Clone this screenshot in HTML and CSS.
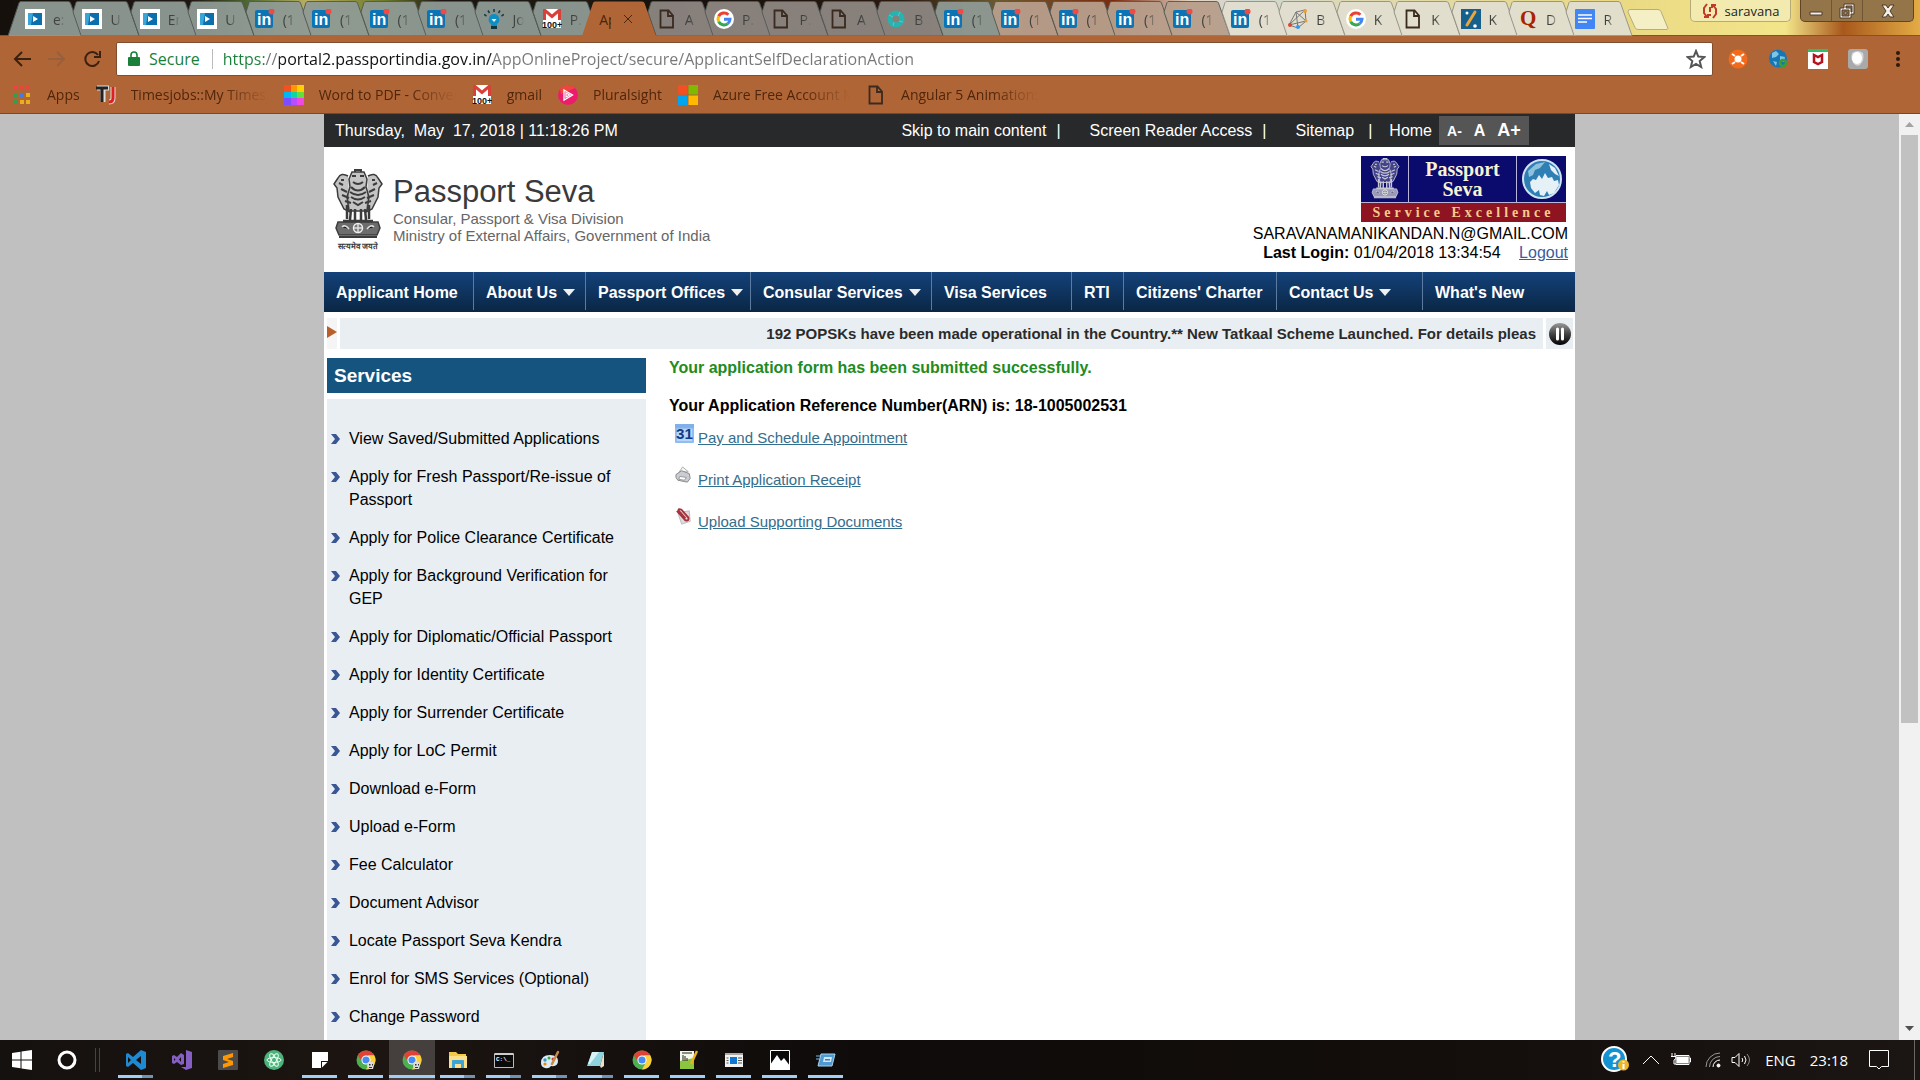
FILE: index.html
```html
<!DOCTYPE html>
<html lang="en">
<head>
<meta charset="utf-8">
<meta name="viewport" content="width=device-width, initial-scale=1">
<title>Passport Seva</title>
<link rel="stylesheet" href="styles.css">
</head>
<body>
<svg class="defs" aria-hidden="true">
  <defs>
    <symbol id="shape" viewBox="0 0 76 36"><path d="M16 35.500L8 12L11 2.500Q11.500 1.500 13 1.500H60Q62 1.500 62.500 3L74 35.500"/></symbol>
    <symbol id="shape-active" viewBox="0 0 76 36"><path d="M0 36L11 3Q11.500 1.500 13 1.500H60Q62 1.500 62.500 3L74 36"/></symbol>
    <symbol id="play" viewBox="0 0 20 20"><path fill="#fff" d="M0 0h20v20H0z"/><path fill="#3aa6d8" d="M3 4h14v12H3z"/><path fill="#0b6fae" d="M8 4h9v12H6z"/><path fill="#fff" d="M8 7l5 3-5 3z"/></symbol>
    <symbol id="linkedin" viewBox="0 0 20 20"><rect y="1" width="18" height="18" rx="2" fill="#0a74b4"/><text x="2" y="16" font-family="Liberation Sans" font-weight="700" font-size="16" fill="#fff">in</text><circle cx="16.500" cy="2.500" r="3" fill="#ef4a45"/></symbol>
    <symbol id="bulb" viewBox="0 0 20 20"><path fill="#0d8fc4" d="M10 5a5.500 5.500 0 0 1 3 10v2H7v-2a5.500 5.500 0 0 1 3-10z"/><path fill="#10353f" d="M7 17h6v3H7z"/><path fill="#fff" d="M7.500 10h5L10 13z"/><path stroke="#123842" stroke-width="1.500" fill="none" d="M10 3V0M5.500 4L4 1.500M14.500 4L16 1.500M2.500 7L0 5.500M17.500 7L20 5.500"/></symbol>
    <symbol id="gmail" viewBox="0 0 20 20"><path fill="#fff" d="M1 0h18v19H1z"/><path fill="none" stroke="#d8403a" stroke-width="3" d="M2.500 11V1L10 7.500 17.500 1v10"/><text x="0" y="19" font-family="Liberation Sans" font-weight="700" font-size="9" fill="#111">100+</text></symbol>
    <symbol id="page" viewBox="0 0 20 20"><path fill="none" stroke="#3a2a20" stroke-width="1.800" d="M3.500 1.500h8l4.500 5v12H3.500zM11 1.500v5.500h5"/></symbol>
    <symbol id="google" viewBox="0 0 20 20"><circle cx="10" cy="10" r="10" fill="#fff"/><g fill="none" stroke-width="3"><path stroke="#ea4335" d="M4.700 7.300A6 6 0 0 1 14.400 5.700"/><path stroke="#fbbc05" d="M4.700 12.700a6 6 0 0 1 0-5.400"/><path stroke="#34a853" d="M13.800 14.600a6 6 0 0 1-9.100-1.900"/><path stroke="#4285f4" d="M10 10.200h6a6 6 0 0 1-2.200 4.400"/></g></symbol>
    <symbol id="ring" viewBox="0 0 20 20"><circle cx="10" cy="10" r="6" fill="none" stroke="#27b3b0" stroke-width="5"/><path stroke="#5cc8c2" stroke-width="1" d="M3 6l4 2M14 3l-2 4M17 13l-4-1M7 17l1-4"/></symbol>
    <symbol id="net" viewBox="0 0 20 20"><path fill="none" stroke="#777" d="M1 16L8 3l9-2 1 11-8 7zM1 16l17-4M8 3l2 16M17 1L1 16M8 3l10 9"/><g fill="#e8a030"><circle cx="17" cy="2" r="2"/><circle cx="18" cy="12" r="1.500"/></g><circle cx="2" cy="16" r="2" fill="#d43"/><circle cx="10" cy="18" r="2" fill="#39e"/></symbol>
    <symbol id="slash" viewBox="0 0 20 20"><path fill="#175f8c" d="M0 0h20v20H0z"/><path stroke="#e9a63a" stroke-width="3" stroke-linecap="round" d="M14 3L6 16"/><circle cx="6" cy="4" r="1.500" fill="#fff"/><circle cx="14" cy="17" r="1.800" fill="#fff"/></symbol>
    <symbol id="quora" viewBox="0 0 20 20"><text x="2" y="16" font-family="Liberation Serif" font-weight="700" font-size="21" fill="#a82400">Q</text></symbol>
    <symbol id="docs" viewBox="0 0 20 20"><rect width="20" height="20" rx="1" fill="#4285f4"/><path stroke="#fff" stroke-width="1.600" d="M3 6h14M3 9.500h14M3 13h9"/></symbol>
    <symbol id="chrome" viewBox="0 0 20 20"><circle cx="10" cy="10" r="9.500" fill="#4caf50"/><path fill="#e04336" d="M1.800 5.200a9.500 9.500 0 0 1 16.400 0H10L6 12z"/><path fill="#fdd03b" d="M18.200 5.200A9.500 9.500 0 0 1 10 19.500L14 12l-2-6.800z"/><circle cx="10" cy="10" r="4.600" fill="#fff"/><circle cx="10" cy="10" r="3.600" fill="#4a8af4"/></symbol>
    <symbol id="chrome-user" viewBox="0 0 20 20"><use href="#chrome"/><path fill="#ddd" d="M12 12h5l1 3-1 4h-4l-2-3z"/><path fill="#333" d="M13 14h1.500v1.500H13zM16 14h1v1.500h-1zM13 17h3v1h-3z"/></symbol>
    <symbol id="emblem" viewBox="0 0 50 72">
      <g fill="none" stroke="currentColor">
        <path fill="currentColor" fill-opacity=".3" stroke-width="1.500" d="M19 3h12l3 7-1 8 3 10-2 14H16l-2-14 3-10-1-8z"/>
        <path fill="currentColor" fill-opacity=".3" stroke-width="1.500" d="M15 7q-7-4-10 2l-4 6 3 4 1 9 6 12 6 3M35 7q7-4 10 2l4 6-3 4-1 9-6 12-6 3"/>
        <path stroke-width="2" d="M19 7h4M27 7h4M20 13q5 4 10 0M22 3v-2h6v2M18 18q7 7 14 0M17 23q8 6 16 0M18 28q7 5 14 0M6 14l4 2M44 14l-4 2M8 20l6 3M42 20l-6 3M9 26l7 3M41 26l-7 3M12 32l6 2M38 32l-6 2M20 33l5 3 5-3M8 11h3M39 11h3"/>
        <path stroke-width="2.500" d="M14 36v14M18 40l-1 11M22 40v11M28 40v11M32 40l1 11M36 36v14M10 52h30"/>
        <path fill="currentColor" fill-opacity=".75" stroke-width="1.500" d="M5 53h40l2 6-3 7H6l-3-7z"/>
      </g>
      <circle cx="25" cy="59" r="4.500" fill="#777" stroke="#eee" stroke-width="1.500"/><path stroke="#ddd" stroke-width="1.500" d="M9 58q3-3 7 2M34 60q4-5 7-2M25 55v8M21 59h8"/>
      <path fill="currentColor" d="M6 67h38v2H6z"/>
    </symbol>
    <symbol id="chev" viewBox="0 0 10 12"><path fill="#3a5795" d="M0 1l5 0 4 5-4 5H0l4-5z"/></symbol>
  </defs>
</svg>

<header class="browser">
  <div class="titlebar">
    <nav class="tabs" aria-label="Tabs">
      <a class="tab" href="#"><svg class="shape"><use href="#shape-active"/></svg><svg class="fav"><use href="#play"/></svg><span>e:</span></a>
      <a class="tab" href="#"><svg class="shape"><use href="#shape"/></svg><svg class="fav"><use href="#play"/></svg><span>U</span></a>
      <a class="tab" href="#"><svg class="shape"><use href="#shape"/></svg><svg class="fav"><use href="#play"/></svg><span>En</span></a>
      <a class="tab" href="#"><svg class="shape"><use href="#shape"/></svg><svg class="fav"><use href="#play"/></svg><span>U</span></a>
      <a class="tab" href="#"><svg class="shape"><use href="#shape"/></svg><svg class="fav"><use href="#linkedin"/></svg><span>(1</span></a>
      <a class="tab" href="#"><svg class="shape"><use href="#shape"/></svg><svg class="fav"><use href="#linkedin"/></svg><span>(1</span></a>
      <a class="tab" href="#"><svg class="shape"><use href="#shape"/></svg><svg class="fav"><use href="#linkedin"/></svg><span>(1</span></a>
      <a class="tab" href="#"><svg class="shape"><use href="#shape"/></svg><svg class="fav"><use href="#linkedin"/></svg><span>(1</span></a>
      <a class="tab" href="#"><svg class="shape"><use href="#shape"/></svg><svg class="fav"><use href="#bulb"/></svg><span>Jo</span></a>
      <a class="tab" href="#"><svg class="shape"><use href="#shape"/></svg><svg class="fav"><use href="#gmail"/></svg><span>P.</span></a>
      <div class="tab active"><svg class="shape"><use href="#shape-active"/></svg><a href="#">Ap</a><button type="button" aria-label="Close tab"><svg viewBox="0 0 10 10"><path d="M1 1l8 8M9 1L1 9"/></svg></button></div>
      <a class="tab brown" href="#"><svg class="shape"><use href="#shape"/></svg><svg class="fav"><use href="#page"/></svg><span>A</span></a>
      <a class="tab brown" href="#"><svg class="shape"><use href="#shape"/></svg><svg class="fav"><use href="#google"/></svg><span>P.</span></a>
      <a class="tab brown" href="#"><svg class="shape"><use href="#shape"/></svg><svg class="fav"><use href="#page"/></svg><span>P.</span></a>
      <a class="tab brown" href="#"><svg class="shape"><use href="#shape"/></svg><svg class="fav"><use href="#page"/></svg><span>A</span></a>
      <a class="tab brown" href="#"><svg class="shape"><use href="#shape"/></svg><svg class="fav"><use href="#ring"/></svg><span>B</span></a>
      <a class="tab" href="#"><svg class="shape"><use href="#shape"/></svg><svg class="fav"><use href="#linkedin"/></svg><span>(1</span></a>
      <a class="tab warm" href="#"><svg class="shape"><use href="#shape"/></svg><svg class="fav"><use href="#linkedin"/></svg><span>(1</span></a>
      <a class="tab warm" href="#"><svg class="shape"><use href="#shape"/></svg><svg class="fav"><use href="#linkedin"/></svg><span>(1</span></a>
      <a class="tab warm" href="#"><svg class="shape"><use href="#shape"/></svg><svg class="fav"><use href="#linkedin"/></svg><span>(1</span></a>
      <a class="tab warm" href="#"><svg class="shape"><use href="#shape"/></svg><svg class="fav"><use href="#linkedin"/></svg><span>(1</span></a>
      <a class="tab light" href="#"><svg class="shape"><use href="#shape"/></svg><svg class="fav"><use href="#linkedin"/></svg><span>(1</span></a>
      <a class="tab light" href="#"><svg class="shape"><use href="#shape"/></svg><svg class="fav"><use href="#net"/></svg><span>B</span></a>
      <a class="tab light" href="#"><svg class="shape"><use href="#shape"/></svg><svg class="fav"><use href="#google"/></svg><span>K</span></a>
      <a class="tab light" href="#"><svg class="shape"><use href="#shape"/></svg><svg class="fav"><use href="#page"/></svg><span>K</span></a>
      <a class="tab light" href="#"><svg class="shape"><use href="#shape"/></svg><svg class="fav"><use href="#slash"/></svg><span>K</span></a>
      <a class="tab light" href="#"><svg class="shape"><use href="#shape"/></svg><svg class="fav"><use href="#quora"/></svg><span>D</span></a>
      <a class="tab light" href="#"><svg class="shape"><use href="#shape"/></svg><svg class="fav"><use href="#docs"/></svg><span>R</span></a>
    </nav>
    <div class="window">
      <button class="newtab" type="button" aria-label="New tab"><svg viewBox="0 0 42 22"><path d="M3 .5h28q2 0 3 2l7 17q0 1-2 1H11q-2 0-3-2L1 3Q1 .5 3 .5z"/></svg></button>
      <button class="profile" type="button"><svg viewBox="0 0 16 16"><path d="M5 1L2 5v5l3 4M2 14h4v-3M11 15l3-4V6l-3-4M14 2h-4v3M8 4v5M8 11v2"/></svg>saravana</button>
      <div class="winbtns">
        <button type="button" aria-label="Minimize"><svg viewBox="0 0 16 16"><path d="M2 9h12v3H2z"/></svg></button>
        <button type="button" aria-label="Restore"><svg viewBox="0 0 16 16"><path fill-rule="evenodd" d="M5 1h10v10h-3v4H1V5h4zM7 3v2h5v4h1V3zM3 7v6h7V7zM5 9h3v2H5z"/></svg></button>
        <button type="button" aria-label="Close"><svg viewBox="0 0 16 16"><path d="M2 2h4l2 3 2-3h4l-4 6 4 6h-4l-2-3-2 3H2l4-6z"/></svg></button>
      </div>
    </div>
  </div>

  <div class="toolbar">
    <button type="button" aria-label="Back"><svg viewBox="0 0 20 20"><path d="M19 10H3M10 3l-7 7 7 7"/></svg></button>
    <button class="dim" type="button" aria-label="Forward"><svg viewBox="0 0 20 20"><path d="M1 10h16M10 3l7 7-7 7"/></svg></button>
    <button type="button" aria-label="Reload"><svg viewBox="0 0 20 20"><path d="M16 6a7 7 0 1 0 1 6M18 2v6h-6"/></svg></button>
    <div class="omnibox">
      <svg class="lock" viewBox="0 0 12 16"><path fill="#188038" d="M1 6h10q1 0 1 1v7q0 1-1 1H1q-1 0-1-1V7q0-1 1-1z"/><path fill="none" stroke="#188038" stroke-width="1.600" d="M3 7V4a3 3 0 0 1 6 0v3"/></svg>
      <span class="secure">Secure</span>
      <input class="url" type="text" aria-label="Address" value="https://portal2.passportindia.gov.in/AppOnlineProject/secure/ApplicantSelfDeclarationAction">
      <button type="button" aria-label="Bookmark this page"><svg viewBox="0 0 20 20"><path d="M10 2l2.300 5.600 6 .5-4.600 3.900 1.500 6L10 14.800 4.800 18l1.500-6L1.700 8.100l6-.5z"/></svg></button>
    </div>
    <div class="extensions">
      <button type="button" aria-label="Extension"><svg viewBox="0 0 20 20"><circle cx="10" cy="10" r="9.500" fill="#f26a1b"/><path stroke="#fff" stroke-width="2" d="M4 5l3 2M16 5l-3 2M4 15l3-2M16 15l-3-2"/><circle cx="10" cy="10" r="3.500" fill="#fff"/></svg></button>
      <button type="button" aria-label="Globe"><svg viewBox="0 0 20 20"><circle cx="10" cy="9.500" r="9" fill="#1976b5"/><path fill="#7cc4e8" d="M4 4l4-2 3 3-3 3-4 1zM12 7l5 1-1 5-4-2zM5 12l4 1-1 4z"/><circle cx="15" cy="14" r="3" fill="none" stroke="#3f9c35" stroke-width="2.500"/></svg></button>
      <button type="button" aria-label="Site safety"><svg viewBox="0 0 20 20"><path fill="#fff" d="M0 0h20v20H0z"/><path fill="#2fbf6b" d="M0 0h20v3H0z"/><path fill="none" stroke="#b5121b" stroke-width="2.500" d="M6 6v7l4 2 4-2V6l-4 2z"/></svg></button>
      <button type="button" aria-label="Shield"><svg viewBox="0 0 20 20"><rect width="20" height="20" rx="3" fill="#a9a9a9"/><path fill="#d5d5d5" d="M4 4q6-4 11 0 2 7-3 12-3 2-6-1Q2 10 4 4z"/><ellipse cx="9" cy="9" rx="5" ry="6" fill="#fff"/></svg></button>
      <button type="button" aria-label="Menu"><svg viewBox="0 0 20 20"><g fill="#2d1a0e"><circle cx="10" cy="4" r="2"/><circle cx="10" cy="10" r="2"/><circle cx="10" cy="16" r="2"/></g></svg></button>
    </div>
  </div>

  <nav class="bookmarks" aria-label="Bookmarks">
    <a href="#"><svg viewBox="0 0 20 20"><g fill="#e8453c"><path d="M2 1h4v4H2zM8 1h4v4H8zM14 1h4v4h-4z"/></g><path fill="#3a9b4e" d="M2 8h4v4H2zM2 15h4v4H2z"/><path fill="#3f7de0" d="M8 8h4v4H8z"/><path fill="#e9b01c" d="M14 8h4v4h-4zM8 15h4v4H8zM14 15h4v4h-4z"/></svg><span>Apps</span></a>
    <a href="#"><svg viewBox="0 0 20 20"><path stroke="#ddd" stroke-width="5" fill="none" d="M1 3h12M7 3v14M17 2v11q0 4-4 4"/><path stroke="#222" stroke-width="3" fill="none" d="M0 3h12M6 3v14"/><path stroke="#e02020" stroke-width="3" fill="none" d="M17 2v11q0 4-4 4"/></svg><span>Timesjobs::My Timesjobs</span></a>
    <a href="#"><svg viewBox="0 0 20 20"><path fill="#f4511e" d="M0 0h7v7H0z"/><path fill="#ff9800" d="M7 0h6v7H7z"/><path fill="#ffcf00" d="M13 0h7v7h-7z"/><path fill="#00b8f0" d="M0 7h7v6H0z"/><path fill="#0fd6a0" d="M7 7h6v6H7z"/><path fill="#5fe03a" d="M13 7h7v6h-7z"/><path fill="#7b4dff" d="M0 13h7v7H0z"/><path fill="#b64dff" d="M7 13h6v7H7z"/><path fill="#f048e0" d="M13 13h7v7h-7z"/></svg><span>Word to PDF - Convert</span></a>
    <a href="#"><svg viewBox="0 0 20 20"><use href="#gmail"/></svg><span>gmail</span></a>
    <a href="#"><svg viewBox="0 0 20 20"><circle cx="10" cy="10" r="10" fill="#ec1c6c"/><path fill="#f2552c" d="M2 4a10 10 0 0 1 15-1L3 9z" opacity=".7"/><path fill="none" stroke="#fff" stroke-width="1.300" d="M6 5l8.500 5L6 15zM8 8l3.500 2L8 12z"/></svg><span>Pluralsight</span></a>
    <a href="#"><svg viewBox="0 0 20 20"><path fill="#f25022" d="M0 0h9.500v9.500H0z"/><path fill="#7fba00" d="M10.500 0H20v9.500h-9.500z"/><path fill="#00a4ef" d="M0 10.500h9.500V20H0z"/><path fill="#ffb900" d="M10.500 10.500H20V20h-9.500z"/></svg><span>Azure Free Account M</span></a>
    <a href="#"><svg viewBox="0 0 20 20"><use href="#page"/></svg><span>Angular 5 Animations</span></a>
  </nav>
</header>

<div class="viewport">
  <div class="canvas">
    <div class="site">
      <div class="topbar">
        <span class="date">Thursday,&nbsp; May&nbsp; 17, 2018 | 11:18:26 PM</span>
        <a href="#main">Skip to main content</a><i>|</i>
        <a href="#">Screen Reader Access</a><i>|</i>
        <a href="#">Sitemap</a><i class="wide">|</i>
        <a href="#">Home</a>
        <div class="sizes"><button type="button" class="small">A-</button><button type="button">A</button><button type="button" class="large">A+</button></div>
      </div>

      <div class="masthead">
        <div class="emblem"><svg><use href="#emblem"/></svg><span>सत्यमेव जयते</span></div>
        <div class="brand">
          <h1>Passport Seva</h1>
          <p>Consular, Passport &amp; Visa Division</p>
          <p>Ministry of External Affairs, Government of India</p>
        </div>
        <div class="account">
          <div class="banner">
            <div class="b-emblem"><svg><use href="#emblem"/></svg></div>
            <div class="b-name">Passport<br>Seva</div>
            <div class="b-globe"><svg viewBox="0 0 40 40"><circle cx="20" cy="20" r="19" fill="#2f7fb5" stroke="#cfe4f2" stroke-width="2"/><path fill="#8fc0dc" d="M6 12l8-7 9-2-5 6-5 2-2 5-4 2z"/><path fill="#e6f1f7" d="M27 5l6 4 4 8-4-2-4-4zM8 23l3-3 3 1 3-5 3 4 3-6 3 5 4-1 2 4 4-1 1 5-5 8-5 2-2-4-3 5-4-1-1-5-4 3-4-5z"/></svg></div>
            <div class="b-tag">Service Excellence</div>
          </div>
          <p>SARAVANAMANIKANDAN.N@GMAIL.COM</p>
          <p><b>Last Login:</b> 01/04/2018 13:34:54 <a href="#">Logout</a></p>
        </div>
      </div>

      <nav class="mainnav" aria-label="Main">
        <a href="#">Applicant Home</a>
        <a class="drop" href="#">About Us</a>
        <a class="drop" href="#">Passport Offices</a>
        <a class="drop" href="#">Consular Services</a>
        <a href="#">Visa Services</a>
        <a href="#">RTI</a>
        <a href="#">Citizens' Charter</a>
        <a class="drop" href="#">Contact Us</a>
        <a href="#">What's New</a>
      </nav>

      <div class="ticker">
        <svg class="marker" viewBox="0 0 10 31"><path fill="#f5f5f5" d="M0 0h10v31H0z"/><path fill="#b9602a" d="M0 8l10 6-10 6z"/></svg>
        <div class="news">192 POPSKs have been made operational in the Country.** New Tatkaal Scheme Launched. For details pleas</div>
        <button type="button" aria-label="Pause"><svg viewBox="0 0 24 24"><defs><linearGradient id="pg" x2="0" y2="1"><stop stop-color="#999"/><stop offset=".5" stop-color="#444"/><stop offset="1" stop-color="#000"/></linearGradient></defs><circle cx="12" cy="12" r="11" fill="url(#pg)"/><path stroke="#fff" stroke-width="3" stroke-linecap="round" d="M9.500 7v10M14.500 7v10"/></svg></button>
      </div>

      <div class="columns">
        <aside class="services">
          <h2>Services</h2>
          <ul>
            <li><svg><use href="#chev"/></svg><a href="#">View Saved/Submitted Applications</a></li>
            <li><svg><use href="#chev"/></svg><a href="#">Apply for Fresh Passport/Re-issue of Passport</a></li>
            <li><svg><use href="#chev"/></svg><a href="#">Apply for Police Clearance Certificate</a></li>
            <li><svg><use href="#chev"/></svg><a href="#">Apply for Background Verification for GEP</a></li>
            <li><svg><use href="#chev"/></svg><a href="#">Apply for Diplomatic/Official Passport</a></li>
            <li><svg><use href="#chev"/></svg><a href="#">Apply for Identity Certificate</a></li>
            <li><svg><use href="#chev"/></svg><a href="#">Apply for Surrender Certificate</a></li>
            <li><svg><use href="#chev"/></svg><a href="#">Apply for LoC Permit</a></li>
            <li><svg><use href="#chev"/></svg><a href="#">Download e-Form</a></li>
            <li><svg><use href="#chev"/></svg><a href="#">Upload e-Form</a></li>
            <li><svg><use href="#chev"/></svg><a href="#">Fee Calculator</a></li>
            <li><svg><use href="#chev"/></svg><a href="#">Document Advisor</a></li>
            <li><svg><use href="#chev"/></svg><a href="#">Locate Passport Seva Kendra</a></li>
            <li><svg><use href="#chev"/></svg><a href="#">Enrol for SMS Services (Optional)</a></li>
            <li><svg><use href="#chev"/></svg><a href="#">Change Password</a></li>
          </ul>
        </aside>
        <main id="main">
          <p class="success">Your application form has been submitted successfully.</p>
          <p class="arn">Your Application Reference Number(ARN) is: 18-1005002531</p>
          <ul class="actions">
            <li><svg viewBox="0 0 20 20"><rect width="20" height="20" rx="1" fill="#8fbcf0"/><path fill="#b9d5f7" d="M2 5h16v13H2z"/><path fill="#7fb0ea" d="M0 0h20v4H0z"/><text x="1" y="16" font-family="Liberation Sans" font-weight="700" font-size="16" fill="#123a86">31</text></svg><a href="#">Pay and Schedule Appointment</a></li>
            <li><svg viewBox="0 0 20 20"><path fill="#f7f7f7" stroke="#aaa" d="M4 7l4-6 6 5z"/><path fill="#c9ccd2" stroke="#888" d="M1 9l6-4 8 3 1 5-3 4-10-2-2-3z"/><path fill="#fff" stroke="#999" d="M5 11l7 1-2 3-6-1z"/></svg><a href="#">Print Application Receipt</a></li>
            <li><svg viewBox="0 0 20 20"><path fill="#ddd" stroke="#bbb" d="M3 5l12-2 1 11-9 3z"/><path fill="none" stroke="#a8323c" stroke-width="2" d="M2 3l9 10q4 1 3-3L7 2Q3 0 4 3l7 8"/></svg><a href="#">Upload Supporting Documents</a></li>
          </ul>
        </main>
      </div>
    </div>
  </div>
  <div class="scrollbar" aria-hidden="true">
    <svg viewBox="0 0 9 6"><path fill="#a3a3a3" d="M0 5l4.500-5L9 5z"/></svg>
    <div class="track"><div class="thumb"></div></div>
    <svg viewBox="0 0 9 6"><path fill="#505050" d="M0 0h9L4.500 5z"/></svg>
  </div>
</div>

<footer class="taskbar">
  <button type="button" aria-label="Start"><svg viewBox="0 0 20 20"><path fill="#fff" d="M0 3l8.500-1.300v7.800H0zM9.500 1.500L20 0v9.500H9.500zM0 10.500h8.500v7.800L0 17zM9.500 10.500H20V20L9.500 18.500z"/></svg></button>
  <button type="button" aria-label="Cortana"><svg viewBox="0 0 20 20"><circle cx="10" cy="10" r="8" fill="none" stroke="#fff" stroke-width="3"/></svg></button>
  <span class="sep"></span>
  <button class="open many" type="button" aria-label="Visual Studio Code"><svg viewBox="0 0 20 20"><path fill="#1f8ad2" fill-rule="evenodd" d="M15 0l5 2v16l-5 2-8-7-5 4-2-1V4l2-1 5 4zM15 6l-5 4 5 4zM2 7v6l3-3z"/></svg></button>
  <button type="button" aria-label="Visual Studio"><svg viewBox="0 0 20 20"><path fill="#865fc5" fill-rule="evenodd" d="M14 0l6 2v16l-6 2-5-3h5zM9 3l3 2v9l-3 1-4-3-3 2-2-1V6l2-1 3 2zM9 7L7 9.500 9 12zM2 8v3l1.500-1.500z"/></svg></button>
  <button type="button" aria-label="Sublime Text"><svg viewBox="0 0 20 20"><rect width="20" height="20" rx="1" fill="#4b4b4b"/><path fill="#ff9800" d="M5 6l10-3v4L9 9l6 2v4L5 18v-4l6-2-6-2z"/></svg></button>
  <button type="button" aria-label="Atom"><svg viewBox="0 0 20 20"><circle cx="10" cy="10" r="10" fill="#4db37d"/><g fill="none" stroke="#eafff2"><ellipse cx="10" cy="10" rx="7" ry="2.500"/><ellipse cx="10" cy="10" rx="7" ry="2.500" transform="rotate(60 10 10)"/><ellipse cx="10" cy="10" rx="7" ry="2.500" transform="rotate(120 10 10)"/></g></svg></button>
  <button class="open" type="button" aria-label="Sticky notes"><svg viewBox="0 0 20 20"><path fill="#fff" d="M2 2h16v9h-7v7H2z"/><path fill="#fff" d="M12 17.500V12h5.500z"/></svg></button>
  <button class="open" type="button" aria-label="Chrome, profile 1"><svg viewBox="0 0 20 20"><use href="#chrome-user"/></svg></button>
  <button class="open current" type="button" aria-label="Chrome, profile 2"><svg viewBox="0 0 20 20"><use href="#chrome-user"/></svg></button>
  <button class="open many" type="button" aria-label="File Explorer"><svg viewBox="0 0 20 20"><path fill="#f5c946" d="M1 2h7l2 2h8v3H1z"/><path fill="#fbe08c" d="M1 6h18v12H1z"/><path fill="#3ea3d6" d="M4 11q0-1 1-1h10q1 0 1 1v7h-3v-4H7v4H4z"/></svg></button>
  <button class="open many" type="button" aria-label="Command prompt"><svg viewBox="0 0 20 20"><path fill="#0a0a0a" stroke="#bbb" d="M.5 3.500h19v14H.5z"/><path fill="#ccc" d="M1 3h18v2H1z"/><text x="2" y="11" font-family="Liberation Mono" font-size="6" font-weight="700" fill="#fff">C:\_</text></svg></button>
  <button class="open many" type="button" aria-label="Paint"><svg viewBox="0 0 20 20"><path fill="#dcecf7" d="M1 13q0-8 9-8 8 0 8 6t-7 5q-2 3-6 2-4-1-4-5z"/><circle cx="5" cy="10" r="1.700" fill="#39c"/><circle cx="9" cy="8" r="1.500" fill="#3a3"/><circle cx="13" cy="9" r="1.500" fill="#d33"/><circle cx="5" cy="14" r="1.600" fill="#e80"/><path stroke="#c98a45" stroke-width="2.500" stroke-linecap="round" d="M18 2l-6 12"/></svg></button>
  <button class="open many" type="button" aria-label="Notepad"><svg viewBox="0 0 20 20"><path fill="#8fd3df" d="M6 2h12l-4 14H1z"/><path fill="#d8f3f7" d="M6 2h7L4 14H2z"/><path fill="#e8e0c8" d="M18 2v14l-3 2-1-2z"/></svg></button>
  <button class="open" type="button" aria-label="Chrome"><svg viewBox="0 0 20 20"><use href="#chrome"/></svg></button>
  <button class="open" type="button" aria-label="Notepad++"><svg viewBox="0 0 20 20"><path fill="#f4f8e8" d="M2 1h14v18H2z"/><path fill="#8cc63f" d="M2 11l14-3v11H2z"/><path stroke="#222" d="M5 5v6M7 6v5M9 8v3M4 3h10"/><path stroke="#e8b321" stroke-width="2.500" d="M19 1l-6 13"/></svg></button>
  <button class="open" type="button" aria-label="Window manager"><svg viewBox="0 0 20 20"><path fill="#f2f2f2" d="M1 3h18v14H1z"/><path fill="#aaa" d="M1 3h18v2H1z"/><path fill="#0a78d6" d="M6 7h7v7H6z"/><path stroke="#555" d="M2.500 8h2M2.500 10.500h2M2.500 13h2M14 8h4M14 10.500h4M14 13h4"/></svg></button>
  <button class="open" type="button" aria-label="Photos"><svg viewBox="0 0 20 20"><path fill="#0a0a0a" stroke="#fff" d="M.5.5h19v19H.5z"/><path fill="#fff" d="M0 15l7-10 4 6 3-3 6 8v4H0z"/></svg></button>
  <button class="open" type="button" aria-label="Run"><svg viewBox="0 0 20 20"><path fill="#4f9ad1" stroke="#a9d3ef" d="M5 4h14l-3 12H2z"/><path fill="#cfe6f6" d="M8 7h8l-1 5H7z"/><path fill="#3a7fb8" d="M9 9h5v1.500H9z"/><path stroke="#7db7e0" d="M0 6h4M0 9h3"/></svg></button>
  <div class="tray">
    <button type="button" class="help" aria-label="Help"><svg viewBox="0 0 28 28"><circle cx="13" cy="13" r="12" fill="#1593d0" stroke="#fff" stroke-width="2"/><text x="7" y="21" font-family="Liberation Sans" font-weight="700" font-size="22" fill="#fff">?</text><circle cx="22.500" cy="19" r="5.500" fill="#f0b429"/><path stroke="#fff" stroke-width="2" d="M22.500 18v5M22.500 15v1.500"/></svg></button>
    <button type="button" class="caret" aria-label="Show hidden icons"><svg viewBox="0 0 20 20"><path d="M2 14l8-8 8 8"/></svg></button>
    <button type="button" class="batt" aria-label="Battery"><svg viewBox="0 0 20 20"><path d="M5 5.500h13v9H5zM18.500 8h1v4h-1M1 3v3M4 3v3M0 6.500h5v2L3 10v4h2"/><path fill="#fff" d="M6 7h11v6H6z"/></svg></button>
    <button type="button" class="wifi" aria-label="Network"><svg viewBox="0 0 20 20"><path stroke="#999" d="M3 17A14 14 0 0 1 17 3M6.500 17A10.500 10.500 0 0 1 17 6.500"/><path d="M10 17a7 7 0 0 1 7-7"/><circle cx="15.500" cy="15.500" r="1.500" fill="#fff"/></svg></button>
    <button type="button" class="vol" aria-label="Volume"><svg viewBox="0 0 20 20"><path d="M1 7.500h3l4-4v13l-4-4H1zM11 8q1.500 2 0 4M13.500 6q3 4 0 8"/><path stroke="#888" d="M16 4q5 6 0 12"/></svg></button>
    <span class="lang">ENG</span>
    <time>23:18</time>
    <button type="button" class="notes" aria-label="Notifications"><svg viewBox="0 0 20 20"><path d="M.5.500h19v16h-7L10 19l-2.500-2.500h-7z"/></svg></button>
    <span class="edge"></span>
  </div>
</footer>
</body>
</html>
```
FILE: styles.css
```css
* { box-sizing: border-box; }
html, body { height: 100%; }
body {
  margin: 0;
  display: flex;
  flex-direction: column;
  overflow: hidden;
  font-family: "Liberation Sans", Arial, sans-serif;
  font-size: 16px;
  color: #000;
}
h1, h2, p, ul { margin: 0; padding: 0; }
ul { list-style: none; }
a { color: inherit; text-decoration: none; }
button { border: 0; padding: 0; margin: 0; background: none; font: inherit; color: inherit; display: flex; align-items: center; justify-content: center; }
svg { display: block; flex: none; }
.defs { position: absolute; width: 0; height: 0; }

/* Browser chrome */
.browser { flex: none; background: #b06536; font-family: "Open Sans", sans-serif; border-bottom: 1px solid #7a4727; }
.titlebar {
  display: flex;
  height: 36px;
  border-bottom: 1px solid #85502e;
  background: linear-gradient(90deg, #15100c 0, #201713 10%, #4f6a35 13%, #b9b060 16%, #6d7a2c 20%, #1c1512 23%, #1d1a10 30%, #150f0c 35%, #2b1a10 47%, #6b5a30 52%, #7a2c10 58%, #e4d3c2 62%, #cfd8d0 65%, #ded9b4 70%, #ead984 84%, #f3e58a 93%, #a8581c 96%, #e3ac45 100%);
}
.tabs { flex: 1; display: flex; padding-left: 8px; min-width: 0; }
.tab { position: relative; flex: 1 1 0; min-width: 0; display: flex; align-items: center; gap: 8px; padding: 3px 0 0 17px; font-size: 14px; color: #40423f; }
.tab .shape { position: absolute; left: 0; top: 0; width: 76px; height: 36px; fill: #8f9a94; stroke: #555b57; stroke-width: 1; opacity: 0.95; }
.tab.brown .shape { fill: #8d8681; }
.tab.warm .shape { fill: #b89f8c; }
.tab.light .shape { fill: #e2dfd0; stroke: #94938a; }
.tab.active { z-index: 2; gap: 12px; color: #4c2409; }
.tab.active .shape { fill: #b06536; stroke: none; opacity: 1; }
.tab.active a, .tab.active button { position: relative; }
.tab.active a { width: 12px; overflow: hidden; }
.tab.active button svg { width: 10px; height: 10px; stroke: #4c2409; stroke-width: 1; fill: none; }
.tab .fav { position: relative; width: 20px; height: 20px; }
.tab span { position: relative; width: 12px; overflow: hidden; white-space: nowrap; mask-image: linear-gradient(90deg, #000 40%, transparent); }
.window { flex: none; width: 304px; display: flex; align-items: flex-start; padding-right: 6px; }
.newtab { margin: 9px 0 0 11px; }
.newtab svg { width: 42px; height: 22px; fill: #f4efc4; stroke: #b3ad80; }
.profile { margin-left: auto; width: 101px; height: 22px; gap: 7px; border: 1px solid #b5ab78; border-top: 0; border-radius: 0 0 5px 5px; font-size: 13px; color: #222; background: #f3eab0; }
.profile svg { width: 16px; height: 16px; fill: none; stroke: #c0392b; stroke-width: 2; }
.winbtns { display: flex; margin-left: 9px; border: 1px solid #5e4429; border-top: 0; border-radius: 0 0 5px 5px; background: #94754a; }
.winbtns button { width: 31px; height: 21px; border-right: 1px solid #6f5535; }
.winbtns button:last-child { width: 50px; border: 0; }
.winbtns svg { width: 16px; height: 16px; fill: #f3efe8; stroke: #4c3a26; stroke-width: 1; }

.toolbar { display: flex; align-items: center; height: 46px; padding: 0 12px; gap: 15px; }
.toolbar > button svg { width: 20px; height: 20px; fill: none; stroke: #3a2110; stroke-width: 2; }
.toolbar > .dim svg { stroke: #97603c; }
.omnibox { flex: 1; display: flex; align-items: center; height: 34px; margin-left: -1px; background: #fff; border: 1px solid #7e4e2e; border-radius: 2px; padding: 0 6px 0 11px; }
.lock { width: 12px; height: 16px; }
.secure { color: #188038; margin-left: 9px; padding-right: 12px; border-right: 1px solid #bbb; line-height: 20px; font-size: 16px; }
.url {
  flex: 1; min-width: 0; border: 0; outline: 0; padding: 0; margin-left: 10px;
  font: 16px "Open Sans", sans-serif;
  color: transparent;
  background: linear-gradient(90deg, #188038 0 42px, #777 42px 56px, #111 56px 270px, #777 270px);
  -webkit-background-clip: text;
  background-clip: text;
}
.omnibox button svg { width: 20px; height: 20px; fill: none; stroke: #555; stroke-width: 2; }
.extensions { display: flex; gap: 20px; width: 180px; }
.extensions svg { width: 20px; height: 20px; }

.bookmarks { display: flex; align-items: center; gap: 16px; height: 31px; padding: 0 12px 6px; color: #4f260b; font-size: 14px; }
.bookmarks a { display: flex; align-items: center; gap: 15px; }
.bookmarks svg { width: 20px; height: 20px; }
.bookmarks span { max-width: 137px; overflow: hidden; white-space: nowrap; mask-image: linear-gradient(90deg, #000 90px, transparent 137px); }

/* Page area */
.viewport { flex: 1; display: flex; min-height: 0; background: #c0c0c0; }
.canvas { flex: 1; overflow: hidden; }
.site { width: 65.88%; min-width: 1200px; min-height: 100%; margin: 0 auto; background: #fff; }

.topbar { display: flex; align-items: center; height: 33px; padding: 0 46px 0 11px; background: #28292b; color: #fff; }
.topbar .date { margin-right: auto; }
.topbar i { font-style: normal; margin: 0 29px 0 10px; }
.topbar i.wide { margin: 0 17px 0 14px; }
.sizes { display: flex; align-items: center; gap: 12px; width: 90px; height: 29px; margin-left: 7px; padding-left: 8px; background: #555; font-weight: 700; }
.sizes .small { font-size: 14px; }
.sizes .large { font-size: 18px; }

.masthead { display: flex; padding: 9px 7px 8px 9px; height: 125px; }
.emblem { width: 50px; padding-top: 13px; color: #3c3c3c; text-align: center; }
.emblem svg { width: 50px; height: 72px; }
.emblem span { display: block; font-size: 8px; line-height: 11px; font-weight: 700; white-space: nowrap; }
.brand { flex: 1; padding: 18px 0 0 10px; color: #666; font-size: 15px; line-height: 17px; }
.brand h1 { font-size: 31px; line-height: 36px; font-weight: 400; color: #3a3a3a; }
.account { text-align: right; line-height: 19px; }
.account .banner { margin: 0 2px 2px auto; }
.account a { color: #3b5c9c; text-decoration: underline; margin-left: 14px; }
.banner { display: grid; grid-template-columns: 47px 1fr 49px; grid-template-rows: 46px 19px; gap: 1px; width: 205px; background: #b9b4d8; color: #fff; line-height: 1; }
.banner > div { background: #0b0b6e; display: flex; align-items: center; justify-content: center; text-align: center; }
.b-emblem svg { width: 30px; height: 42px; color: #c8c8d4; }
.b-globe svg { width: 40px; height: 40px; }
.banner .b-name { font: 700 20px/20px "Liberation Serif", serif; color: #f7f3d4; }
.banner .b-tag { grid-column: 1 / -1; background: #8e1422; font: 700 14px/18px "Liberation Serif", serif; letter-spacing: 4px; color: #f5c98c; white-space: nowrap; }

.mainnav { display: grid; grid-template-columns: 150fr 112fr 165fr 181fr 140fr 52fr 153fr 146fr 152fr; height: 40px; padding-bottom: 2px; background: linear-gradient(#14427a, #0a2644); color: #fff; font-weight: 700; }
.mainnav a { display: flex; align-items: center; gap: 6px; padding: 3px 0 0 12px; border-right: 1px solid #5c7ba0; white-space: nowrap; }
.mainnav a:last-child { border: 0; }
.mainnav .drop::after { content: ""; border: 6px solid transparent; border-top: 7px solid #f0f0f0; border-bottom: 0; }

.ticker { display: flex; gap: 3px; padding: 6px 2px 0 3px; height: 37px; }
.marker { width: 10px; height: 31px; }
.news { flex: 1; background: #e9eef2; text-align: right; font-size: 15px; line-height: 31px; font-weight: 700; color: #2b2b2b; padding-right: 7px; white-space: nowrap; overflow: hidden; }
.ticker button { width: 27px; background: #e9eef2; }
.ticker button svg { width: 24px; height: 24px; }

.columns { display: grid; grid-template-columns: 319px 1fr; column-gap: 23px; padding: 9px 3px 0; }
.services h2 { height: 35px; padding-left: 7px; background: #14547f; color: #fff; font-size: 19px; line-height: 35px; }
.services ul { margin-top: 6px; padding: 28px 12px 15px 4px; background: #e9eef2; }
.services li { display: flex; gap: 8px; padding-bottom: 15px; line-height: 23px; }
.services li svg { width: 10px; height: 12px; margin-top: 6px; }
main { padding-top: 1px; font-weight: 700; line-height: 18px; }
.success { color: #228b22; }
.arn { margin-top: 20px; }
.actions { padding: 1px 0 0 6px; font-size: 15px; font-weight: 400; }
.actions li { display: flex; gap: 4px; height: 42px; padding-top: 8px; color: #336e8c; }
.actions li svg { width: 19px; height: 19px; }
.actions a { text-decoration: underline; padding-top: 5px; }

.scrollbar { flex: none; width: 21px; background: #f1f1f1; display: flex; flex-direction: column; align-items: center; padding: 8px 0; }
.scrollbar svg { width: 9px; height: 6px; }
.track { flex: 1; width: 17px; padding: 7px 0; }
.thumb { height: 66.5%; background: #c1c1c1; }

/* Taskbar */
.taskbar { flex: none; display: flex; height: 40px; background: linear-gradient(90deg, #15110e, #1c1512 20%, #0e0b0a 45%, #130e0b 75%, #1b1613); color: #fff; font: 15px "Open Sans", sans-serif; }
.taskbar > button { position: relative; width: 46px; }
.taskbar > button:first-child { width: 44px; }
.taskbar svg { width: 20px; height: 20px; }
.sep { width: 5px; height: 24px; margin: 8px 13px 8px 5px; border: 1px solid #4a423c; border-width: 0 1px; }
.taskbar .open::after { content: ""; position: absolute; left: 5px; right: 6px; bottom: 2px; height: 3px; background: #a3cef5; }
.taskbar .many::after { background: linear-gradient(90deg, #a3cef5 24px, #7292b3 24px); }
.taskbar .current { background: #45403d; }
.taskbar .current::after { left: 0; right: 0; }
.tray { margin-left: auto; display: flex; align-items: center; }
.tray svg { fill: none; stroke: #fff; stroke-width: 1; }
.tray .help svg { width: 28px; height: 28px; stroke: none; }
.tray .caret { margin-left: 12px; }
.tray .batt { margin-left: 10px; }
.tray .wifi { margin-left: 12px; }
.tray .vol { margin-left: 8px; }
.lang { margin-left: 14px; }
time { margin-left: 14px; }
.notes { margin-left: 21px; }
.edge { width: 1px; height: 40px; margin: 0 5px 0 25px; background: #6b6663; }
```
